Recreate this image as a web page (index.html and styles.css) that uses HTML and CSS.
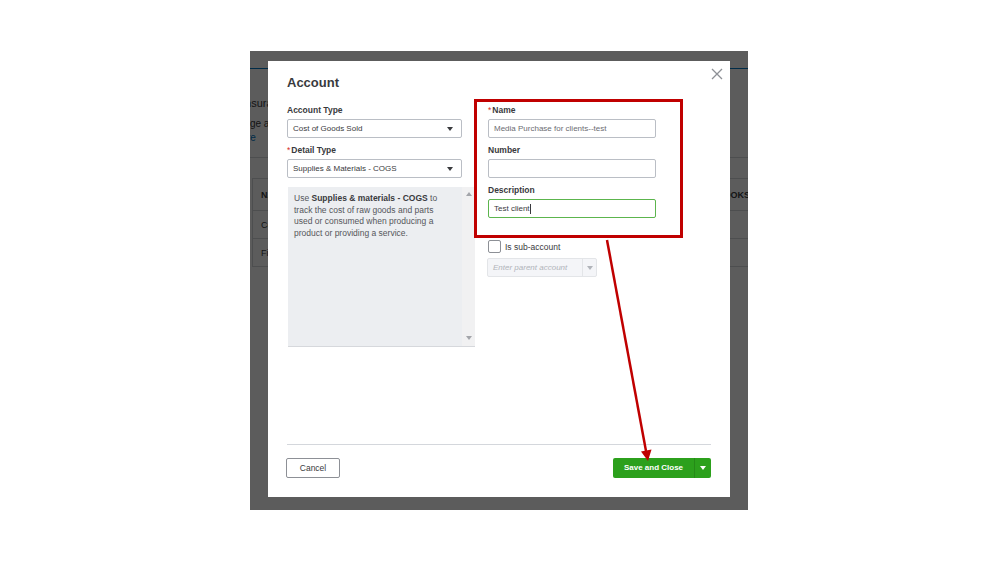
FILE: index.html
```html
<!DOCTYPE html>
<html lang="en">
<head>
    <meta charset="UTF-8">
    <meta name="viewport" content="width=device-width, initial-scale=1.0">
    <title>Account</title>
    <link rel="stylesheet" href="styles.css">
</head>
<body>

<div class="frame">
    <div class="screen">
        <!-- page behind the dialog -->
        <div class="app">
            <div class="app-top"></div>
            <div class="app-intro">
                <p class="intro-title">Insurance</p>
                <p class="intro-text">Change accounts</p>
                <p class="intro-link">more</p>
            </div>
            <div class="app-bar"></div>
            <table class="app-table">
                <thead>
                    <tr>
                        <th>NAME</th>
                        <th class="col-right">BALANCE IN QUICKBOOKS</th>
                    </tr>
                </thead>
                <tbody>
                    <tr><td>Cost of Goods Sold</td><td></td></tr>
                    <tr><td>Fixed Assets</td><td></td></tr>
                </tbody>
            </table>
        </div>
        <div class="scrim"></div>

        <div class="modal">
            <div class="modal-head">
                <h2>Account</h2>
                <button class="close-btn" aria-label="Close">
                    <svg width="12" height="12" viewBox="0 0 12 12"><path d="M1 1L11 11M11 1L1 11" stroke="#8d9096" stroke-width="1.3" fill="none"/></svg>
                </button>
            </div>

            <div class="modal-body">
                <div class="col-left">
                    <div class="field">
                        <label>Account Type</label>
                        <div class="select"><span>Cost of Goods Sold</span><i class="caret"></i></div>
                    </div>
                    <div class="field">
                        <label><span class="req">*</span>Detail Type</label>
                        <div class="select"><span>Supplies &amp; Materials - COGS</span><i class="caret"></i></div>
                    </div>
                    <div class="detail-help">
                        <div class="help-text">Use <b>Supplies &amp; materials - COGS</b> to<br>track the cost of raw goods and parts<br>used or consumed when producing a<br>product or providing a service.</div>
                        <div class="help-scroll"><i class="caret caret-up"></i><i class="caret"></i></div>
                    </div>
                </div>

                <div class="col-right-form">
                    <div class="field">
                        <label><span class="req">*</span>Name</label>
                        <div class="input input-muted">Media Purchase for clients--test</div>
                    </div>
                    <div class="field">
                        <label>Number</label>
                        <div class="input"></div>
                    </div>
                    <div class="field">
                        <label>Description</label>
                        <div class="input input-focus">Test client<span class="cursor"></span></div>
                    </div>
                    <div class="check-row">
                        <span class="checkbox"></span>
                        <span>Is sub-account</span>
                    </div>
                    <div class="parent-select">
                        <span class="placeholder">Enter parent account</span>
                        <span class="parent-arrow"><i class="caret"></i></span>
                    </div>
                </div>
            </div>

            <div class="modal-foot">
                <button class="cancel-btn">Cancel</button>
                <div class="save-btn">
                    <span class="save-main">Save and Close</span>
                    <span class="save-more"><i class="caret"></i></span>
                </div>
            </div>
        </div>
    </div>

    <!-- annotation drawn on the screenshot -->
    <div class="callout"></div>
    <svg class="arrow" width="999" height="562" viewBox="0 0 999 562">
        <line x1="607" y1="240" x2="646" y2="451" stroke="#c00000" stroke-width="2.5"/>
        <polygon points="648,461 651.5,449.5 641,451.5" fill="#c00000"/>
    </svg>
</div>

</body>
</html>
```

FILE: styles.css
```css
body {
    margin: 0;
    padding: 0;
    background-color: #ffffff;
    font-family: "Liberation Sans", Arial, sans-serif;
    color: #393a3d;
}
.frame {
    position: relative;
    width: 999px;
    height: 562px;
    overflow: hidden;
}
.screen {
    position: relative;
    margin: 51px 0 0 250px;
    width: 498px;
    height: 459px;
    overflow: hidden;
    background-color: #ffffff;
}

/* background page */
.app-top {
    height: 17px;
    border-bottom: 1px solid #0077c5;
}
.app-intro {
    padding-top: 27px;
}
.app-intro p {
    margin: 0;
    font-size: 10px;
    line-height: 14px;
}
.intro-title {
    margin-left: -8px !important;
    font-size: 11px !important;
}
.intro-text {
    margin-top: 7px !important;
    margin-left: -24px !important;
}
.intro-link {
    margin-left: -17px !important;
    color: #0077c5;
}
.app-bar {
    margin-top: 12px;
    height: 20px;
    border-top: 1px solid #d4d7dc;
}
.app-table {
    width: 498px;
    margin-left: 2px;
    border-collapse: collapse;
    border-top: 1px solid #d4d7dc;
    border-left: 1px solid #d4d7dc;
    font-size: 9px;
}
.app-table th, .app-table td {
    text-align: left;
    padding: 0 8px;
    border-bottom: 1px solid #d4d7dc;
}
.app-table th {
    height: 31px;
    font-weight: bold;
}
.app-table td {
    height: 27px;
}
.app-table .col-right {
    text-align: right;
    padding-right: 0;
}
.scrim {
    position: absolute;
    top: 0;
    left: 0;
    right: 0;
    bottom: 0;
    background-color: rgba(0, 0, 0, 0.64);
}

/* dialog */
.modal {
    position: absolute;
    left: 18px;
    top: 10px;
    width: 462px;
    height: 436px;
    box-sizing: border-box;
    padding: 0 19px;
    background-color: #ffffff;
    display: flex;
    flex-direction: column;
}
.modal-head {
    display: flex;
    justify-content: space-between;
    padding-top: 12px;
}
.modal-head h2 {
    margin: 0;
    font-size: 13px;
    line-height: 20px;
    font-weight: bold;
}
.close-btn {
    margin: -5px -12px 0 0;
    padding: 0;
    width: 12px;
    height: 12px;
    border: none;
    background: none;
    display: flex;
}
.modal-body {
    flex: 1;
    display: flex;
    gap: 26px;
    margin-top: 11px;
}
.col-left {
    width: 175px;
}
.col-right-form {
    width: 168px;
}
.field {
    margin-bottom: 6px;
}
.field label {
    display: block;
    font-size: 8.5px;
    line-height: 12px;
    font-weight: bold;
    margin-bottom: 3px;
}
.req {
    color: #d52b1e;
    font-weight: normal;
    margin-right: 1px;
}
.select, .input {
    height: 19px;
    box-sizing: border-box;
    border: 1px solid #babec5;
    border-radius: 2px;
    padding: 0 5px;
    font-size: 8px;
    line-height: 17px;
    display: flex;
    align-items: center;
    justify-content: space-between;
}
.select .caret {
    margin-right: 3px;
}
.input-muted {
    color: #6b6c72;
}
.input-focus {
    border-color: #5cb54d;
    justify-content: flex-start;
}
.cursor {
    width: 1px;
    height: 10px;
    background-color: #393a3d;
}
.caret {
    display: inline-block;
    width: 0;
    height: 0;
    border-left: 3px solid transparent;
    border-right: 3px solid transparent;
    border-top: 4px solid #393a3d;
}
.caret-up {
    border-top: none;
    border-bottom: 4px solid #a3a5aa;
}
.detail-help {
    margin: 9px 0 0 1px;
    width: 187px;
    height: 160px;
    box-sizing: border-box;
    background-color: #eceef1;
    border-bottom: 1px solid #d6d8dc;
    display: flex;
}
.help-text {
    flex: 1;
    padding: 6px 6px;
    font-size: 8.5px;
    line-height: 11.5px;
    color: #55565b;
}
.help-text b {
    color: #393a3d;
}
.help-scroll {
    width: 13px;
    background-color: #f1f1f2;
    display: flex;
    flex-direction: column;
    align-items: center;
    justify-content: space-between;
    padding: 5px 0 6px;
}
.help-scroll .caret {
    border-top-color: #a3a5aa;
}
.help-scroll .caret-up {
    border-bottom-color: #a3a5aa;
}
.check-row {
    margin-top: 22px;
    display: flex;
    align-items: center;
    gap: 4px;
    font-size: 8.5px;
}
.checkbox {
    width: 13px;
    height: 13px;
    box-sizing: border-box;
    border: 1px solid #8d9096;
    border-radius: 2px;
}
.parent-select {
    margin-top: 5px;
    margin-left: -1px;
    width: 110px;
    height: 19px;
    box-sizing: border-box;
    border: 1px solid #e3e5e8;
    border-radius: 2px;
    background-color: #f4f5f8;
    display: flex;
    font-size: 8px;
    line-height: 17px;
}
.placeholder {
    flex: 1;
    padding-left: 5px;
    font-style: italic;
    color: #b1b4ba;
}
.parent-arrow {
    width: 13px;
    border-left: 1px solid #e3e5e8;
    display: flex;
    align-items: center;
    justify-content: center;
}
.parent-arrow .caret {
    border-top-color: #b1b4ba;
}
.modal-foot {
    display: flex;
    justify-content: space-between;
    align-items: flex-start;
    height: 53px;
    padding-top: 13px;
    box-sizing: border-box;
    border-top: 1px solid #d4d7dc;
}
.cancel-btn {
    width: 54px;
    height: 20px;
    margin-left: -1px;
    padding: 0;
    border: 1px solid #8d9096;
    border-radius: 2px;
    background-color: #ffffff;
    font-family: "Liberation Sans", Arial, sans-serif;
    font-size: 8.5px;
    color: #393a3d;
}
.save-btn {
    width: 98px;
    height: 20px;
    display: flex;
    border-radius: 2px;
    background-color: #2ca01c;
    color: #ffffff;
}
.save-main {
    width: 81px;
    font-size: 8px;
    font-weight: bold;
    line-height: 20px;
    text-align: center;
    border-right: 1px solid #258a17;
}
.save-more {
    flex: 1;
    display: flex;
    align-items: center;
    justify-content: center;
}
.save-more .caret {
    border-top-color: #ffffff;
}

/* red annotation */
.callout {
    position: absolute;
    left: 474px;
    top: 99px;
    width: 209px;
    height: 139px;
    box-sizing: border-box;
    border: 3px solid #c00000;
}
.arrow {
    position: absolute;
    left: 0;
    top: 0;
}
```
